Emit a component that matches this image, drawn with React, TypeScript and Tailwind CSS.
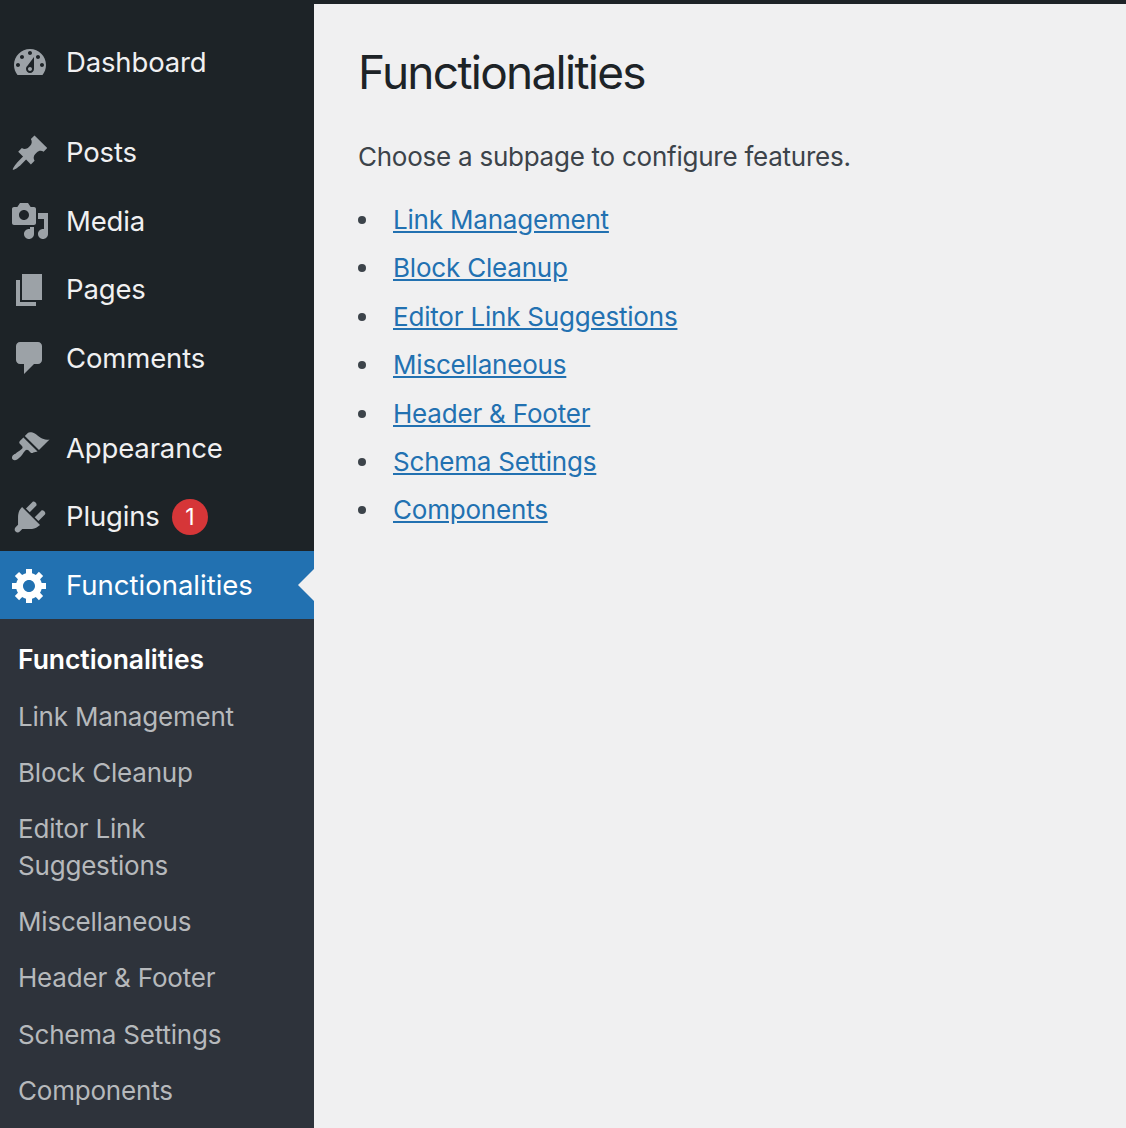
import React from "react";

const icons: Record<string, string> = {
  dashboard: "M3.76 16h12.48c1.1-1.37 1.76-3.11 1.76-5 0-4.42-3.58-8-8-8s-8 3.58-8 8c0 1.89.66 3.63 1.76 5zM10 4c.55 0 1 .45 1 1s-.45 1-1 1-1-.45-1-1 .45-1 1-1zM6 6c.55 0 1 .45 1 1s-.45 1-1 1-1-.45-1-1 .45-1 1-1zm8 0c.55 0 1 .45 1 1s-.45 1-1 1-1-.45-1-1 .45-1 1-1zm-5.37 5.55L12 7v6c0 1.1-.9 2-2 2s-2-.9-2-2c0-.57.24-1.08.63-1.45zM4 10c.55 0 1 .45 1 1s-.45 1-1 1-1-.45-1-1 .45-1 1-1zm12 0c.55 0 1 .45 1 1s-.45 1-1 1-1-.45-1-1 .45-1 1-1zm-5 3c0-.55-.45-1-1-1s-1 .45-1 1 .45 1 1 1 1-.45 1-1z",
  post: "M10.44 3.02l1.82-1.82 6.36 6.35-1.83 1.82c-1.05-.68-2.48-.57-3.41.36l-.75.75c-.92.93-1.04 2.35-.35 3.41l-1.83 1.82-2.41-2.41-2.8 2.79c-.42.42-3.38 2.71-3.8 2.29s1.86-3.39 2.28-3.81l2.79-2.79L4.1 9.36l1.83-1.82c1.05.69 2.48.57 3.4-.36l.75-.75c.93-.92 1.05-2.35.36-3.41z",
  media: "M13 11V4c0-.55-.45-1-1-1h-1.67L9 1H5L3.67 3H2c-.55 0-1 .45-1 1v7c0 .55.45 1 1 1h10c.55 0 1-.45 1-1zM7 4.5c1.38 0 2.5 1.12 2.5 2.5S8.38 9.5 7 9.5 4.5 8.38 4.5 7 5.62 4.5 7 4.5zM14 6h5v10.5c0 1.38-1.12 2.5-2.5 2.5S14 17.88 14 16.5s1.12-2.5 2.5-2.5c.17 0 .34.02.5.05V9h-3V6zm-4 8.05V13h2v3.5c0 1.38-1.12 2.5-2.5 2.5S7 17.88 7 16.5 8.12 14 9.5 14c.17 0 .34.02.5.05z",
  page: "M6 15V2h10v13H6zm-1 1h8v2H3V5h2v11z",
  comments: "M5 2h9c1.1 0 2 .9 2 2v7c0 1.1-.9 2-2 2h-2l-5 5v-5H5c-1.1 0-2-.9-2-2V4c0-1.1.9-2 2-2z",
  appearance: "M14.48 11.06L7.41 3.99l1.5-1.5c.5-.56 2.3-.47 3.51.32 1.21.8 1.43 1.28 2.91 2.1 1.18.64 2.45 1.26 4.45.85zm-.71.71L6.7 4.7 4.93 6.47c-.39.39-.39 1.02 0 1.41l1.06 1.06c.39.39.39 1.03 0 1.42-.6.6-1.43 1.11-2.21 1.69-.35.26-.7.53-1.01.84C1.43 13.23.4 14.75 1.4 15.75s2.52-.03 3.84-1.37c.31-.31.58-.66.84-1.01.58-.78 1.09-1.61 1.69-2.21.39-.39 1.03-.39 1.42 0l1.06 1.06c.39.39 1.02.39 1.41 0z",
  plugins: "M13.11 4.36L9.87 7.6 8 5.73l3.24-3.24c.35-.34 1.05-.2 1.56.32.52.51.66 1.21.31 1.55zm-8 1.77l.91-1.12 9.01 9.01-1.19.84c-.71.71-2.63 1.16-3.82 1.16H6.14L4.9 17.26c-.59.59-1.54.59-2.12 0-.59-.58-.59-1.53 0-2.12l1.24-1.24v-3.88c0-1.13.4-3.19 1.09-3.89zm7.26 3.97l3.24-3.24c.34-.35 1.04-.21 1.55.31.52.51.66 1.21.31 1.55l-3.24 3.25z",
  generic: "M18 12h-2.18c-.17.7-.44 1.35-.81 1.93l1.54 1.54-2.1 2.1-1.54-1.54c-.58.36-1.23.63-1.91.79V19H8v-2.18c-.68-.16-1.33-.43-1.91-.79l-1.54 1.54-2.12-2.12 1.54-1.54c-.36-.58-.63-1.23-.79-1.91H1V9.03h2.17c.16-.7.44-1.35.8-1.94L2.43 5.55l2.1-2.1 1.54 1.54c.58-.37 1.24-.64 1.93-.81V2h3v2.18c.68.16 1.33.43 1.91.79l1.54-1.54 2.12 2.12-1.54 1.54c.36.59.64 1.24.8 1.94H18V12zm-8.5 1.5c1.66 0 3-1.34 3-3s-1.34-3-3-3-3 1.34-3 3 1.34 3 3 3z",
};

function Icon({ name, white }: { name: string; white?: boolean }) {
  return (
    <svg viewBox="0 0 20 20" className={white ? "w-10 h-10 shrink-0 fill-white" : "w-10 h-10 shrink-0 fill-[#9ca2a7]"}>
      <path fillRule="evenodd" d={icons[name]} />
    </svg>
  );
}

function Row({ icon, label, children }: { icon: string; label: string; children?: React.ReactNode }) {
  return (
    <div className="flex items-center h-[68.5px] pl-[10px] text-[27.5px] tracking-[-0.15px] text-[#f0f0f1]">
      <Icon name={icon} />
      <span className="ml-[16px]">{label}</span>
      {children}
    </div>
  );
}

const links = ["Link Management", "Block Cleanup", "Editor Link Suggestions", "Miscellaneous", "Header & Footer", "Schema Settings", "Components"];

export default function App() {
  return (
    <div className="h-[1128px] overflow-hidden flex flex-col bg-[#f0f0f1] font-['Inter',sans-serif]">
      <div className="h-1 shrink-0 bg-[#1d2327]" />
      <div className="flex flex-1 min-h-0">
        <aside className="w-[314px] shrink-0 flex flex-col bg-[#1d2327] pt-[24.5px]">
          <Row icon="dashboard" label="Dashboard" />
          <div className="h-[21.5px]" />
          <Row icon="post" label="Posts" />
          <Row icon="media" label="Media" />
          <Row icon="page" label="Pages" />
          <Row icon="comments" label="Comments" />
          <div className="h-[21.5px]" />
          <Row icon="appearance" label="Appearance" />
          <Row icon="plugins" label="Plugins">
            <span className="ml-3 w-9 h-9 rounded-full bg-[#d63638] text-white text-[23px] flex items-center justify-center">1</span>
          </Row>
          <div className="relative flex items-center h-[68px] pl-[10px] bg-[#2271b1] text-white text-[27.5px]">
            <Icon name="generic" white />
            <span className="ml-[16px] pt-[1.5px]">Functionalities</span>
            <div className="absolute right-0 top-1/2 -translate-y-1/2 border-y-[16px] border-y-transparent border-r-[16px] border-r-[#f0f0f1]" />
          </div>
          <div className="flex-1 bg-[#2e333b] pt-[12px] pl-[18px] text-[26px] leading-[37px] tracking-[-0.2px] text-[#b6b9bc]">
            <div className="font-semibold text-white text-[26.5px] tracking-[-0.05px] pt-[10px] pb-[10px]">Functionalities</div>
            <div className="flex flex-col">
              {["Link Management", "Block Cleanup"].map((t) => (
                <div key={t} className="py-[9.6px]">{t}</div>
              ))}
              <div className="py-[9.6px]">Editor Link<br />Suggestions</div>
              {["Miscellaneous", "Header & Footer", "Schema Settings", "Components"].map((t) => (
                <div key={t} className="py-[9.6px]">{t}</div>
              ))}
            </div>
          </div>
        </aside>
        <main className="flex-1 pl-[44px] pt-[38px]">
          <h1 className="text-[46px] leading-[60px] tracking-[-1.72px] text-[#1d2327]">Functionalities</h1>
          <p className="mt-[36.5px] text-[26px] leading-[36px] tracking-[-0.25px] text-[#3c434a]">Choose a subpage to configure features.</p>
          <ul className="mt-[27.5px] text-[26px] leading-[36px] tracking-[-0.2px]">
            {links.map((l) => (
              <li key={l} className="flex items-center gap-[27px] mb-[12.4px]">
                <span className="w-2 h-2 shrink-0 rounded-full bg-[#3c434a]" />
                <a href="#" className="underline text-[#2271b1]">{l}</a>
              </li>
            ))}
          </ul>
        </main>
      </div>
    </div>
  );
}
